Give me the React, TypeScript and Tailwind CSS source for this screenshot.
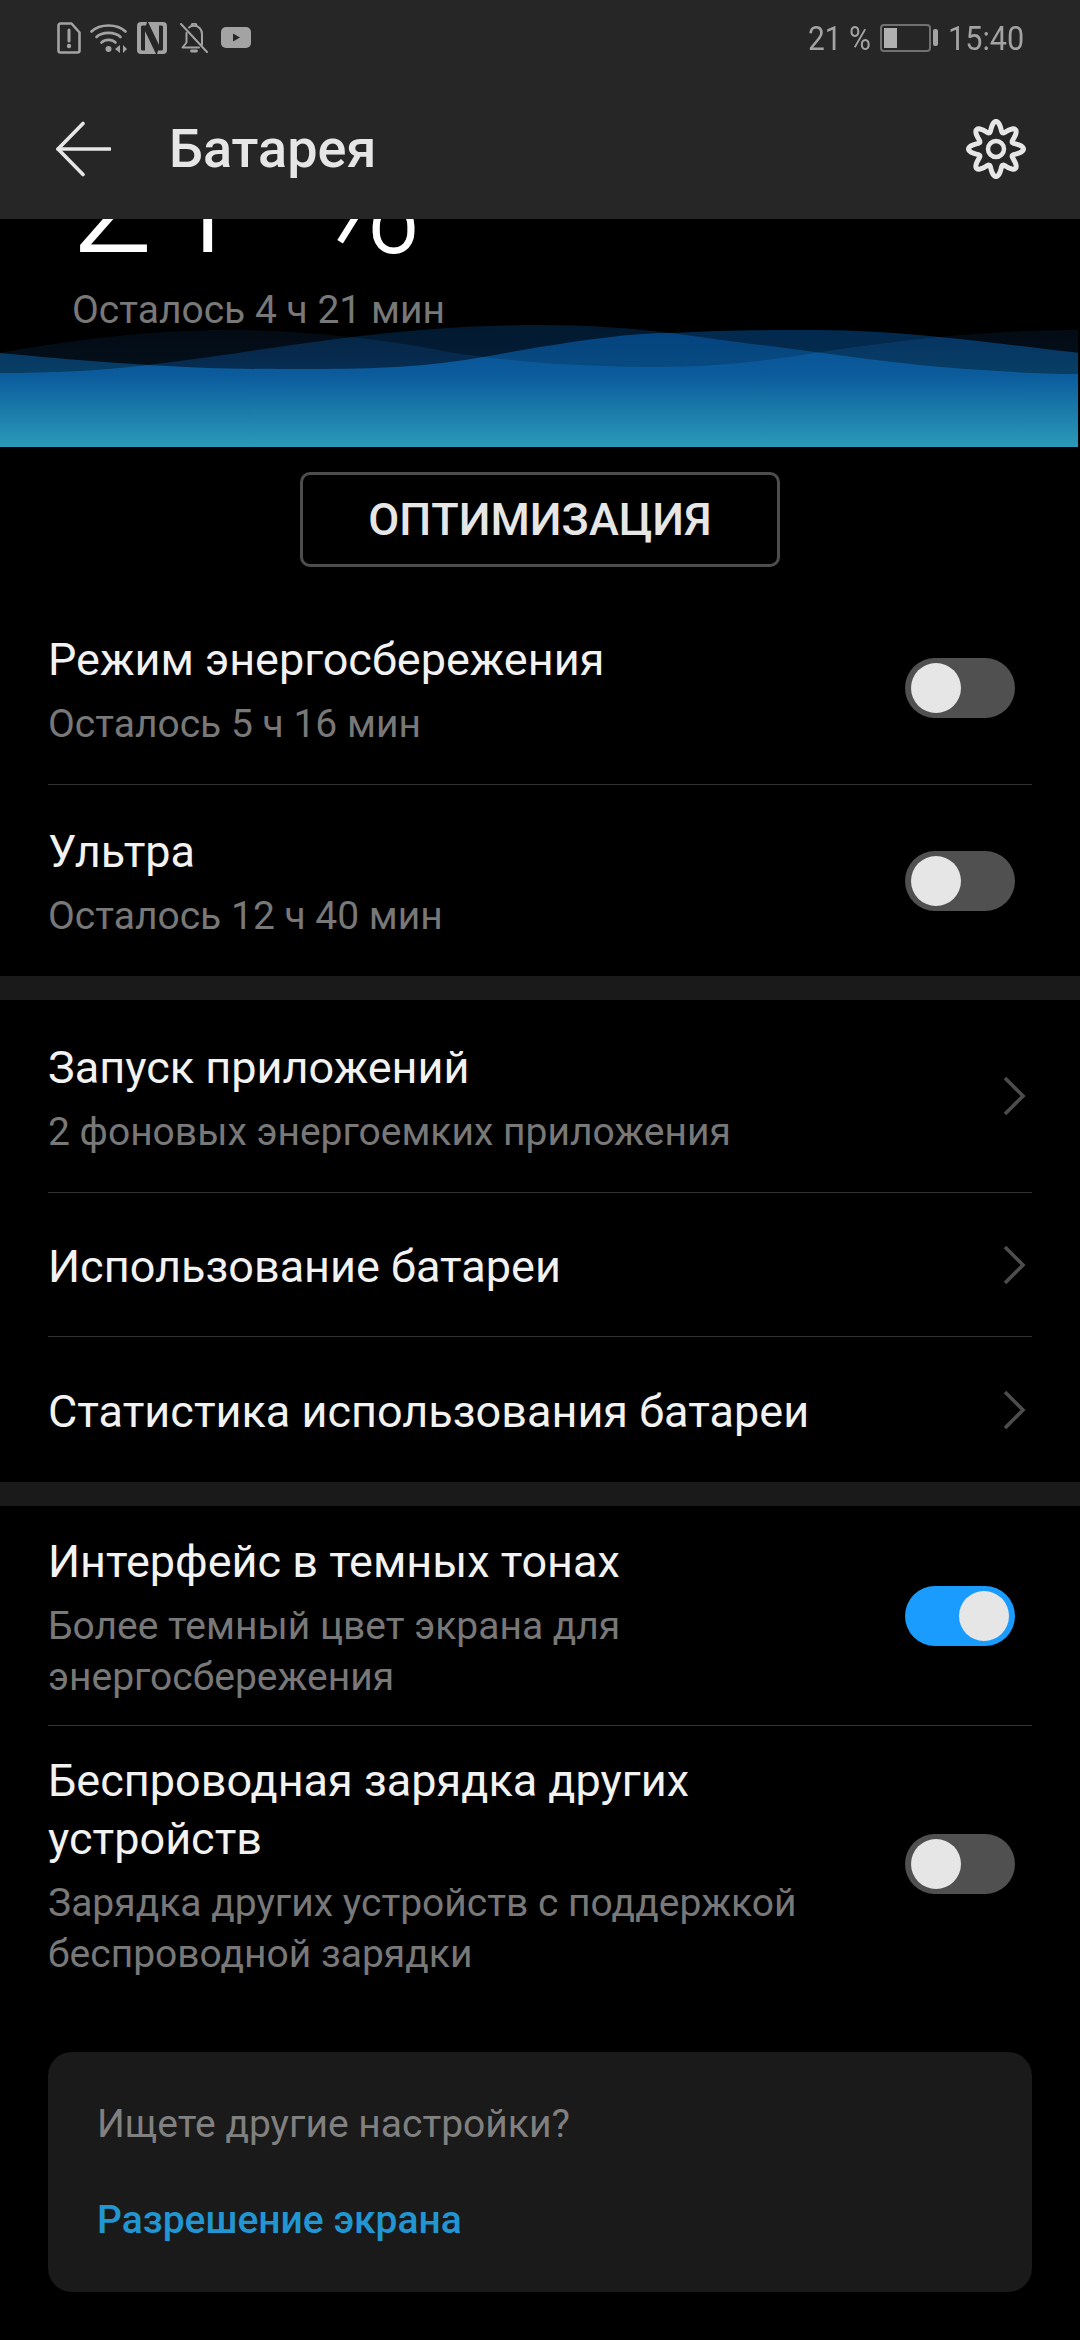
import React from "react";

const FONT = "font-['Roboto',sans-serif]";

// wavy 8-lobe outline for the settings icon
const gearPath = Array.from({ length: 160 }, (_, i) => {
  const t = (i / 160) * Math.PI * 2;
  const r = 22.5 + 5 * Math.cos(8 * t);
  const x = 30 + r * Math.sin(t);
  const y = 30 - r * Math.cos(t);
  return `${i === 0 ? "M" : "L"}${x.toFixed(2)} ${y.toFixed(2)}`;
}).join(" ") + "Z";

function StatusIcons() {
  return (
    <div className="flex items-center">
      <svg width="24" height="32" viewBox="0 0 24 32" className="ml-[57px]" fill="none" stroke="#a3a3a3">
        <path d="M3.5 1.5h11l8 9v18a2 2 0 0 1-2 2h-17a2 2 0 0 1-2-2v-25a2 2 0 0 1 2-2z" strokeWidth="2.6" strokeLinejoin="round" />
        <path d="M12 8v11" strokeWidth="3" strokeLinecap="round" />
        <circle cx="12" cy="24" r="2.2" fill="#a3a3a3" stroke="none" />
      </svg>
      <svg width="37" height="31" viewBox="0 0 37 31" className="ml-[9px]" fill="none" stroke="#a3a3a3" strokeWidth="2.6" strokeLinecap="round">
        <path d="M1.5 9.5C10 1.5 27 1.5 35.5 9.5" />
        <path d="M6.5 15C12 9.5 25 9.5 30.5 15" />
        <path d="M11.5 20.5C15 17 22 17 25.5 20.5" />
        <circle cx="18.5" cy="27" r="3" fill="#a3a3a3" stroke="none" />
        <path d="M30 23v8l-5-4zM33 23v8l4-4z" fill="#a3a3a3" stroke="none" />
      </svg>
      <svg width="30" height="32" viewBox="0 0 30 32" className="ml-[10px]">
        <path d="M4 0h6l-1 3.500H5.500a1.500 1.500 0 0 0-1.500 1.500v22a1.500 1.500 0 0 0 1.500 1.500H8V9l11 23H4a4 4 0 0 1-4-4V4a4 4 0 0 1 4-4z" fill="#a3a3a3" />
        <path d="M26 32h-6l1-3.500h3.500a1.500 1.500 0 0 0 1.500-1.500V5a1.500 1.500 0 0 0-1.500-1.500H22V23L11 0h15a4 4 0 0 1 4 4v24a4 4 0 0 1-4 4z" fill="#a3a3a3" />
      </svg>
      <svg width="28" height="30" viewBox="0 0 28 30" className="ml-[13px]" fill="none" stroke="#a3a3a3" strokeWidth="2" strokeLinecap="round" strokeLinejoin="round">
        <path d="M9 4.500C10.500 3.200 12 2.800 14 2.800c5 0 8 3.700 8 8.500v10.500" />
        <path d="M6.500 10v9.500L2.500 24.500H19" />
        <path d="M11.500 3a2.500 2.500 0 0 1 5 0" />
        <path d="M11.500 28h5" strokeWidth="2.800" />
        <path d="M1 1l26 28" />
      </svg>
      <svg width="30" height="21" viewBox="0 0 30 21" className="ml-[13px]">
        <rect width="30" height="21" rx="5" fill="#a3a3a3" />
        <path d="M12 6.500v8l7-4z" fill="#262626" />
      </svg>
    </div>
  );
}

function BatteryStatus() {
  return (
    <div className="flex items-center text-[#a3a3a3] text-[34px] leading-[40px]">
      <span className="w-[62px] scale-x-[0.88] origin-left whitespace-nowrap">21 %</span>
      <div className="ml-[10px] flex items-center">
        <div className="w-[51px] h-[28px] rounded-[4px] border-[2px] border-[#707070] p-[2px]">
          <div className="w-[13px] h-full bg-[#b0b0b0]" />
        </div>
        <div className="ml-[2px] w-[5px] h-[17px] rounded-[2px] bg-[#a3a3a3]" />
      </div>
      <span className="ml-[10px] w-[75px] scale-x-[0.9] origin-left whitespace-nowrap">15:40</span>
    </div>
  );
}

function Header() {
  return (
    <div className="bg-[#262626] h-[219px] flex flex-col">
      <div className="h-[75px] flex items-center justify-between pr-[57px]">
        <StatusIcons />
        <BatteryStatus />
      </div>
      <div className="flex-1 flex items-center pt-[4px]">
        <svg width="56" height="56" viewBox="0 0 56 56" className="ml-[55px]" fill="none" stroke="#e6e6e6" strokeWidth="3.600" strokeLinecap="round" strokeLinejoin="round">
          <path d="M28 2.500L3 28l25 25.500" />
          <path d="M3 28h52" />
        </svg>
        <span className="ml-[58px] text-[54px] leading-[60px] font-medium text-[#e6e6e6]">Батарея</span>
        <svg width="60" height="60" viewBox="0 0 60 60" className="ml-auto mr-[54px]" fill="none" stroke="#e6e6e6">
          <path d={gearPath} strokeWidth="5" strokeLinejoin="round" />
          <circle cx="30" cy="30" r="8" strokeWidth="4.500" />
        </svg>
      </div>
    </div>
  );
}

function Wave() {
  return (
    <svg viewBox="0 325 1078 122" className="block w-[1078px] h-[122px] isolate">
      <defs>
        <linearGradient id="wa" gradientUnits="userSpaceOnUse" x1="0" y1="325" x2="0" y2="447">
          <stop offset="0" stopColor="#030b14" />
          <stop offset="0.41" stopColor="#03101c" />
          <stop offset="1" stopColor="#0e343c" />
        </linearGradient>
        <linearGradient id="wb" gradientUnits="userSpaceOnUse" x1="0" y1="325" x2="0" y2="447">
          <stop offset="0" stopColor="#021a30" />
          <stop offset="0.41" stopColor="#031e38" />
          <stop offset="1" stopColor="#0e323c" />
        </linearGradient>
        <linearGradient id="we" gradientUnits="userSpaceOnUse" x1="0" y1="325" x2="0" y2="447">
          <stop offset="0" stopColor="#022850" />
          <stop offset="0.41" stopColor="#052e48" />
          <stop offset="1" stopColor="#0f3440" />
        </linearGradient>
      </defs>
      <path className="mix-blend-plus-lighter" fill="url(#wa)" d="M0 353C70 340 150 330 230 330C300 330 390 340 448 352C510 362 590 367 660 367C720 367 770 360 815 353C860 346 900 341 939 337C985 333 1030 330 1080 330V447H0Z" />
      <path className="mix-blend-plus-lighter" fill="url(#wb)" d="M0 373C50 373 100 371 148 365C215 357 280 346 344 338C410 330 475 325 540 325C590 325 630 328 671 333C720 340 770 346 815 352C850 357 885 361 919 365C975 370 1030 374 1080 374V447H0Z" />
      <path className="mix-blend-plus-lighter" fill="url(#we)" d="M0 353C50 358 100 362 148 365C195 368 240 369 280 369C340 369 400 369 450 362C480 358 510 352 540 347C585 340 630 333 671 333C715 330 770 330 815 330C860 330 900 333 939 337C990 342 1035 348 1080 353V447H0Z" />
    </svg>
  );
}

function Hero() {
  return (
    <div className="overflow-hidden">
      <div className="h-[106px] pl-[72px] flex flex-col">
        <div className="-mt-[93px] -ml-[2px] shrink-0 text-[150px] leading-[150px] tracking-[8px] font-light text-white whitespace-nowrap">21 <span className="ml-[14px]">%</span></div>
        <div className="mt-[9px] shrink-0 text-[39px] leading-[50px] text-[#787878] whitespace-nowrap">Осталось 4 ч 21 мин</div>
      </div>
      <Wave />
    </div>
  );
}

function Toggle({ on = false }: { on?: boolean }) {
  return (
    <div className={`w-[110px] h-[60px] rounded-full flex items-center shrink-0 px-[6px] ${on ? "bg-[#1a9cff] justify-end" : "bg-[#505050] justify-start"}`}>
      <div className="w-[50px] h-[50px] rounded-full bg-[#e6e6e6]" />
    </div>
  );
}

function Chevron() {
  return (
    <svg width="24" height="40" viewBox="0 0 24 40" fill="none" stroke="#4d4d4d" strokeWidth="3.600" className="shrink-0">
      <path d="M3 2l18 18L3 38" />
    </svg>
  );
}

function Row({ title, sub, right, divider, className }: { title: React.ReactNode; sub?: React.ReactNode; right: React.ReactNode; divider?: boolean; className: string }) {
  return (
    <div className={`ml-[48px] mr-[48px] flex items-center ${divider ? "border-b border-[#333333]" : ""} ${className}`}>
      <div className="flex-1 min-w-0 pt-[4px]">
        <div className="text-[45px] leading-[58px] text-[#f2f2f2]">{title}</div>
        {sub && <div className="mt-[10px] text-[39px] leading-[51px] text-[#787878]">{sub}</div>}
      </div>
      {right}
    </div>
  );
}

export default function App() {
  return (
    <div className={`w-[1080px] h-[2340px] bg-black overflow-hidden ${FONT}`}>
      <Header />
      <Hero />
      <div className="flex justify-center mt-[25px]">
        <div className="w-[480px] h-[95px] rounded-[10px] border-[3px] border-[#4d4d4d] flex items-center justify-center text-[45px] font-medium text-[#e6e6e6]">ОПТИМИЗАЦИЯ</div>
      </div>

      <div className="mt-[25px]">
        <Row className="h-[193px]" divider title="Режим энергосбережения" sub="Осталось 5 ч 16 мин" right={<div className="mr-[17px]"><Toggle /></div>} />
        <Row className="h-[191px]" title="Ультра" sub="Осталось 12 ч 40 мин" right={<div className="mr-[17px]"><Toggle /></div>} />
      </div>
      <div className="h-[24px] bg-[#1a1a1a]" />
      <Row className="h-[193px]" divider title="Запуск приложений" sub="2 фоновых энергоемких приложения" right={<div className="mr-[6px]"><Chevron /></div>} />
      <Row className="h-[144px]" divider title="Использование батареи" right={<div className="mr-[6px]"><Chevron /></div>} />
      <Row className="h-[145px]" title="Статистика использования батареи" right={<div className="mr-[6px]"><Chevron /></div>} />
      <div className="h-[24px] bg-[#1a1a1a]" />
      <Row className="h-[220px]" divider title="Интерфейс в темных тонах" sub={<>Более темный цвет экрана для<br />энергосбережения</>} right={<div className="mr-[17px]"><Toggle on /></div>} />
      <Row className="h-[280px] pb-[4px]" title={<>Беспроводная зарядка других<br />устройств</>} sub={<>Зарядка других устройств с поддержкой<br />беспроводной зарядки</>} right={<div className="mr-[17px]"><Toggle /></div>} />

      <div className="mx-[48px] mt-[46px] h-[240px] rounded-[24px] bg-[#1a1a1a] px-[49px] pt-[47px]">
        <div className="text-[39px] leading-[50px] text-[#808080]">Ищете другие настройки?</div>
        <div className="mt-[46px] text-[39px] leading-[50px] font-medium text-[#2196d3]">Разрешение экрана</div>
      </div>
    </div>
  );
}
